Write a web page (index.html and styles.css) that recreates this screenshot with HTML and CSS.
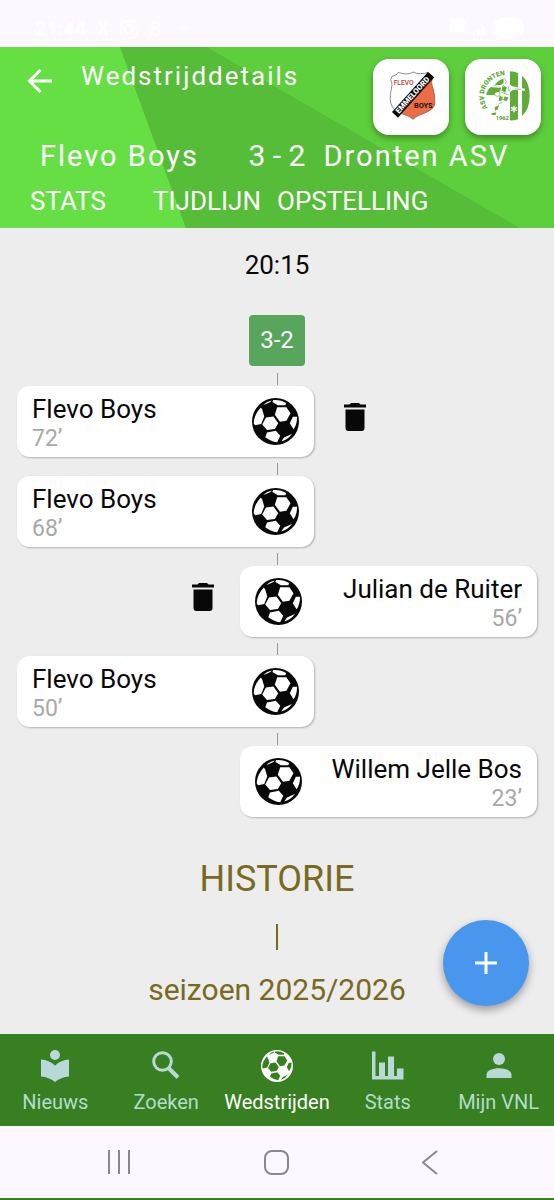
FILE: index.html
```html
<!DOCTYPE html>
<html lang="nl">
<head>
<meta charset="utf-8">
<meta name="viewport" content="width=device-width, initial-scale=1">
<title>Wedstrijddetails</title>
<link rel="stylesheet" href="styles.css">
</head>
<body>
<svg class="symbols" aria-hidden="true">
  <symbol id="ball" viewBox="6 6 138 138">
    <path fill="currentColor" fill-rule="evenodd" d="M6 75A69 69 0 1 1 144 75A69 69 0 1 1 6 75Z
      M47 63 36 84 50 100 73 97 83 80 69 60Z
      M80 33 73 55 88 76 107 73 119 51 107 33Z
      M32 34Q12 55 11 80L15 86 33 82 42 60 36 40Z
      M40 26Q50 16 64 13L60 18 44 25Z
      M68 12Q90 10 106 21L104 27H82L66 18Z
      M50 107 45 121Q60 133 80 136L89 117 76 102Z
      M126 61 117 80 128 98Q139 82 138 61Z
      M92 134 100 122 123 112Q112 128 92 134Z"/>
  </symbol>
  <symbol id="trash" viewBox="0 0 22 28">
    <path d="M0 1.500H5.500L7 0H15L16.500 1.500H22V4.500H0ZM1.500 6.500H20.500V25Q20.500 28 17.500 28H4.500Q1.500 28 1.500 25Z" fill="currentColor"/>
  </symbol>
</svg>

<div class="status">
  <span>21:44</span><span>X</span>
  <svg width="20" height="20" viewBox="0 0 20 20" fill="none" stroke="currentColor" stroke-width="2"><rect x="2" y="2" width="16" height="16" rx="5"/><circle cx="10" cy="10" r="4"/></svg>
  <span>8</span><span class="status-dot">•</span>
  <svg class="status-end" width="78" height="22" viewBox="0 0 78 22" fill="currentColor"><rect x="1" y="1" width="17" height="13" rx="3"/><path d="M24 19v-4h3v4zM29 19v-7h3v7zM34 19V8h3v11z"/><rect x="45" y="0" width="31" height="20" rx="10"/></svg>
</div>

<header class="header">
  <svg class="header-bg" viewBox="0 0 554 181" preserveAspectRatio="none" aria-hidden="true">
    <path d="M0 0H120L186 181H0Z" fill="#66df45"/>
    <path d="M120 0H207L520 181H186Z" fill="#55bd37"/>
    <path d="M207 0H554V181H520Z" fill="#5ecf3c"/>
  </svg>
  <div class="topbar">
    <button class="back" aria-label="Terug">
      <svg width="26" height="26" viewBox="0 0 26 26" fill="none" stroke="currentColor" stroke-width="3"><path d="M25 13H3M13.500 2 2.500 13 13.500 24"/></svg>
    </button>
    <h1 class="title">Wedstrijddetails</h1>
    <div class="crest">
      <svg viewBox="23 28 228 228" role="img" aria-label="Flevo Boys">
        <path d="M80 80Q94 78 99 68Q112 73 122 73Q134 73 144 67Q153 73 165 72Q178 73 188 68L202 82Q195 96 203 117Q210 138 208 162C204 190 159 190 143 209C128 190 85 195 76 160C70 128 87 109 76 90Z" fill="#fff" stroke="#555" stroke-width="2"/>
        <path d="M202 84Q195 96 203 117Q210 138 208 162C204 190 159 190 143 209C133 198 119 195 103 191Z" fill="#ed6c45" stroke="#833" stroke-width="1"/>
        <path d="M80 187 188 67 207 83 98 204Z" fill="#080808"/>
        <text x="85" y="105" class="crest-flevo">FLEVO</text>
        <text x="146" y="174" class="crest-boys">BOYS</text>
        <text transform="translate(101 193) rotate(-48)" class="crest-band">EMMELOORD</text>
      </svg>
    </div>
    <div class="crest">
      <svg viewBox="300 28 228 228" role="img" aria-label="ASV Dronten">
        <defs><path id="arc" d="M368 175A62 62 0 0 1 432 79"/></defs>
        <g fill="#5fac38">
          <path d="M435 65Q449 65 459 70V209Q449 213 435 212Z"/>
          <path d="M471 78Q494 98 494 138Q494 178 471 199Z"/>
          <path d="M363 136Q369 112 390 105Q400 90 416 87V128L400 136Z"/>
        </g>
        <path d="M416 85Q425 78 431 87L430 101 442 110 480 117 480 123 445 120 435 128 433 153 416 166 402 177 393 196 382 193 389 177 399 162 402 149 388 140 390 129 406 125 408 114 381 113 376 108 407 106 417 99Z" fill="#fff"/>
        <g fill="none" stroke="#5fac38" stroke-width="2">
          <path d="M418 86 424 95 421 102M414 106 423 115 419 131M429 109 433 126M407 127 430 135M405 143 414 151 427 143M400 164 413 157M388 174 400 180M450 118 468 119"/>
          <circle cx="397" cy="132" r="8"/>
        </g>
        <path d="M404 138 414 143 408 155 401 153ZM419 140 431 144 424 155 415 151ZM390 172 403 166 398 178 390 184ZM380 191 394 188 391 197 379 195ZM412 110 426 112 420 127 410 124Z" fill="#5fac38"/>
        <g stroke="#fff" stroke-width="4"><path d="M447 168V188M438 173 456 183M456 173 438 183"/></g>
        <text class="crest-asv"><textPath href="#arc">ASV DRONTEN</textPath></text>
        <text x="392" y="211" class="crest-year">1962</text>
      </svg>
    </div>
  </div>
  <div class="score">
    <span>Flevo Boys</span><span class="score-value">3 - 2</span><span>Dronten ASV</span>
  </div>
  <nav class="tabs" aria-label="Wedstrijd">
    <button>STATS</button><button>TIJDLIJN</button><button>OPSTELLING</button>
  </nav>
</header>

<main class="main">
  <time class="time">20:15</time>
  <div class="result">3-2</div>
  <ol class="timeline">
    <li class="event">
      <article class="card"><div><h2>Flevo Boys</h2><p>72’</p></div><svg class="ball"><use href="#ball"/></svg></article>
      <button class="remove" aria-label="Verwijder"><svg width="22" height="28"><use href="#trash"/></svg></button>
    </li>
    <li class="event">
      <article class="card"><div><h2>Flevo Boys</h2><p>68’</p></div><svg class="ball"><use href="#ball"/></svg></article>
    </li>
    <li class="event away">
      <article class="card"><div><h2>Julian de Ruiter</h2><p>56’</p></div><svg class="ball"><use href="#ball"/></svg></article>
      <button class="remove" aria-label="Verwijder"><svg width="22" height="28"><use href="#trash"/></svg></button>
    </li>
    <li class="event">
      <article class="card"><div><h2>Flevo Boys</h2><p>50’</p></div><svg class="ball"><use href="#ball"/></svg></article>
    </li>
    <li class="event away">
      <article class="card"><div><h2>Willem Jelle Bos</h2><p>23’</p></div><svg class="ball"><use href="#ball"/></svg></article>
    </li>
  </ol>
  <section class="history">
    <h2>HISTORIE</h2>
    <div class="history-line"></div>
    <p>seizoen 2025/2026</p>
  </section>
  <button class="fab" aria-label="Toevoegen">
    <svg width="22" height="22" viewBox="0 0 22 22" stroke="currentColor" stroke-width="3"><path d="M11 0V22M0 11H22"/></svg>
  </button>
</main>

<nav class="bottom" aria-label="Hoofdmenu">
  <a href="#nieuws"><svg viewBox="0 0 32 32" fill="currentColor"><circle cx="16" cy="5" r="5"/><path d="M2 9.500Q10 10 16 15.500Q22 10 30 9.500V26.500Q22 27 16 32Q10 27 2 26.500Z"/></svg>Nieuws</a>
  <a href="#zoeken"><svg viewBox="0 0 32 32" fill="none" stroke="currentColor" stroke-width="3"><circle cx="12.500" cy="11.500" r="8.800"/><path d="M18.500 18 28 27.500" stroke-width="4"/></svg>Zoeken</a>
  <a href="#wedstrijden" class="active" aria-current="page"><svg><use href="#ball"/></svg>Wedstrijden</a>
  <a href="#stats"><svg viewBox="0 0 32 32" fill="currentColor"><path d="M0 1.500H3.500V26H7V12.500H13V26H16V6.500H22V26H25V18.500H31.500V29.500H0Z"/></svg>Stats</a>
  <a href="#mijn"><svg viewBox="0 0 32 32" fill="currentColor"><circle cx="16" cy="9" r="6"/><path d="M3.500 28V24.500C3.500 16 28.500 16 28.500 24.500V28Z"/></svg>Mijn VNL</a>
</nav>

<div class="system">
  <button aria-label="Recent"><svg width="22" height="24" viewBox="0 0 22 24" fill="none" stroke="currentColor" stroke-width="2"><path d="M1 0V24M11 0V24M21 0V24"/></svg></button>
  <button aria-label="Start"><svg width="25" height="25" viewBox="0 0 25 25" fill="none" stroke="currentColor" stroke-width="2"><rect x="1" y="1" width="23" height="23" rx="7"/></svg></button>
  <button aria-label="Vorige"><svg width="16" height="25" viewBox="0 0 16 25" fill="none" stroke="currentColor" stroke-width="2"><path d="M15 1 1 12.500 15 24"/></svg></button>
</div>
</body>
</html>
```
FILE: styles.css
```css
* { box-sizing: border-box; }
body {
  margin: 0;
  min-height: 100vh;
  display: flex;
  flex-direction: column;
  font-family: Roboto, "Noto Sans", sans-serif;
  background: #ededed;
  color: #080808;
}
h1, h2, p, ol { margin: 0; padding: 0; font-weight: 400; }
button { border: 0; padding: 0; background: none; color: inherit; font: inherit; }
svg { display: block; flex: none; }
.symbols { position: absolute; width: 0; height: 0; }

.status {
  height: 47px;
  padding: 10px 28px 0 35px;
  display: flex;
  align-items: center;
  gap: 10px;
  background: #fdf8ff;
  color: #fff;
  font-size: 20px;
  font-weight: 700;
}
.status-dot { margin-left: 10px; }
.status-end { margin-left: auto; }

.header {
  position: relative;
  isolation: isolate;
  padding-bottom: 2px;
  color: #fff;
  background: #5ecf3c;
}
.header-bg { position: absolute; inset: 0; width: 100%; height: 100%; z-index: -1; }
.topbar { display: flex; gap: 16px; padding: 12px 13px 0 27px; height: 88px; }
.back { width: 26px; height: 44px; display: grid; place-items: center; }
.title {
  flex: 1;
  margin-left: 12px;
  font-size: 26px;
  line-height: 34px;
  letter-spacing: 2px;
}
.crest {
  width: 76px;
  height: 76px;
  border-radius: 16px;
  background: #fff;
  box-shadow: 0 3px 6px rgba(0, 0, 0, .35);
}
.crest-flevo { font: 500 20px Roboto, sans-serif; fill: #c0392b; }
.crest-boys { font: 700 22px Roboto, sans-serif; fill: #111; }
.crest-band { font: 900 23px Roboto, sans-serif; fill: #fff; }
.crest-asv { font: 900 20px Roboto, sans-serif; fill: #5fac38; }
.crest-year { font: 900 17px Roboto, sans-serif; fill: #5fac38; }
.score {
  display: grid;
  grid-template-columns: 208fr 75fr 230fr;
  padding-left: 40px;
  font-size: 29px;
  line-height: 42px;
  letter-spacing: 2px;
  white-space: nowrap;
}
.score-value { letter-spacing: 0; font-size: 30px; }
.tabs {
  display: grid;
  grid-template-columns: 123fr 124fr 277fr;
  padding-left: 30px;
  font-size: 26px;
  line-height: 49px;
}
.tabs button { text-align: left; }

.main { position: relative; flex: 1; display: flex; flex-direction: column; align-items: center; }
.time { margin-top: 20px; font-size: 26px; line-height: 34px; }
.result {
  margin-top: 33px;
  width: 56px;
  border-radius: 4px;
  background: #58a65c;
  color: #fff;
  font-size: 24px;
  line-height: 51px;
  text-align: center;
}
.timeline { width: 100%; padding: 1px 17px 0; list-style: none; }
.event { display: grid; grid-template-columns: 4fr 3fr; padding-top: 19px; position: relative; }
.event::before {
  content: "";
  position: absolute;
  top: 6px;
  left: 50%;
  width: 1px;
  height: 12px;
  background: #999;
}
.card {
  display: flex;
  justify-content: space-between;
  align-items: center;
  padding: 0 15px;
  height: 71px;
  border-radius: 13px;
  background: #fff;
  box-shadow: 1px 1px 2px rgba(0, 0, 0, .25);
}
.card h2 { padding-top: 2px; font-size: 26px; line-height: 32px; }
.card p { font-size: 23px; line-height: 28px; color: #a8a8a8; }
.ball { width: 47px; height: 47px; }
.remove { height: 62px; padding-left: 30px; justify-self: start; display: grid; align-items: center; }
.away { grid-template-columns: 3fr 4fr; }
.away .card { grid-column: 2; grid-row: 1; flex-direction: row-reverse; text-align: right; }
.away .remove { grid-column: 1; grid-row: 1; justify-self: end; padding: 0 26px 0 0; }

.history { color: #786a20; text-align: center; padding: 39px 0 22px; }
.history h2 { font-size: 36px; line-height: 46px; }
.history-line { width: 2px; height: 26px; margin: 22px auto; background: currentColor; }
.history p { font-size: 30px; line-height: 36px; }
.fab {
  position: absolute;
  right: 25px;
  bottom: 28px;
  width: 86px;
  height: 86px;
  border-radius: 50%;
  display: grid;
  place-items: center;
  background: #4896ed;
  color: #fff;
  box-shadow: 0 4px 8px rgba(0, 0, 0, .35);
}

.bottom {
  display: grid;
  grid-template-columns: repeat(5, 1fr);
  height: 92px;
  padding-top: 16px;
  background: #377f21;
}
.bottom a {
  display: flex;
  flex-direction: column;
  align-items: center;
  gap: 7px;
  color: #b3dcca;
  font-size: 20px;
  line-height: 26px;
  text-decoration: none;
  white-space: nowrap;
}
.bottom svg { width: 32px; height: 32px; color: #b9d8d8; }
.bottom .active, .bottom .active svg { color: #fff; }

.system {
  display: flex;
  justify-content: space-between;
  align-items: center;
  height: 74px;
  padding: 0 116px 0 108px;
  border-bottom: 2px solid #377f21;
  background: #fdf8ff;
  color: #8c868e;
}
```
